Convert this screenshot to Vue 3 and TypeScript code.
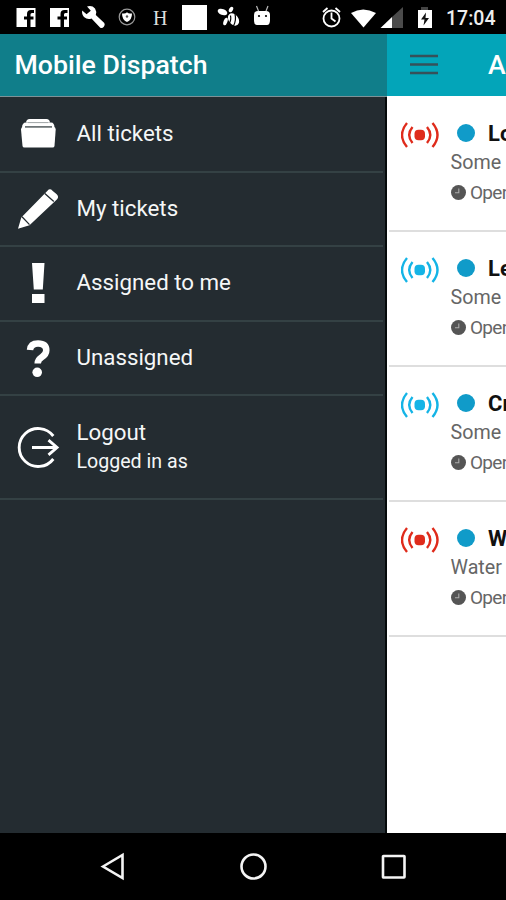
<script setup lang="ts">
interface MenuItem {
  icon: 'box' | 'pencil' | 'alert' | 'question' | 'logout'
  label: string
  detail?: string
}

interface Ticket {
  title: string
  summary: string
  urgent: boolean
}

const menu: MenuItem[] = [
  { icon: 'box', label: 'All tickets' },
  { icon: 'pencil', label: 'My tickets' },
  { icon: 'alert', label: 'Assigned to me' },
  { icon: 'question', label: 'Unassigned' },
  { icon: 'logout', label: 'Logout', detail: 'Logged in as' },
]

const tickets: Ticket[] = [
  { title: 'Lo', summary: 'Some', urgent: true },
  { title: 'Le', summary: 'Some', urgent: false },
  { title: 'Cr', summary: 'Some', urgent: false },
  { title: 'W', summary: 'Water', urgent: true },
]
</script>

<template>
  <div class="screen">
    <header class="status">
      <svg class="status-icons" viewBox="0 0 440 34" width="440" height="34">
        <g fill="#fff">
          <path d="M16.500 8h19v19h-5v-7.500h3v-3h-3v-2q0-1.500 1.500-1.500h2v-3h-3q-4 0-4 4v2.500h-3v3h3V27H16.500z" />
          <path d="M50 8h19v19h-5v-7.500h3v-3h-3v-2q0-1.500 1.500-1.500h2v-3h-3q-4 0-4 4v2.500h-3v3h3V27H50z" />
          <path d="M87 6.500q5-1.500 8 2 2 3 .8 6.500l8.500 8q1 1.800-.3 3.500-2 2.500-4 1l-8.500-9q-4 1.500-7.500-1.500-2.500-2.600-1.800-6.500l4.300 3.800 4.300-3.600z" />
          <path d="M122 13.500q4.500 0 5-1.500.5 1.500 5 1.500 0 6.500-5 8.500-5-2-5-8.500z" />
          <rect x="182" y="5" width="25" height="25" />
          <ellipse cx="233.500" cy="19.500" rx="4.800" ry="6.800" transform="rotate(-38 233.500 19.500)" />
          <ellipse cx="222.500" cy="12" rx="5" ry="3" transform="rotate(20 222.500 12)" />
          <ellipse cx="231" cy="9.500" rx="1.900" ry="3" transform="rotate(30 231 9.500)" />
          <ellipse cx="225.500" cy="21.500" rx="1.900" ry="4" transform="rotate(20 225.500 21.500)" />
          <path d="M254 15q0-4 4-4h8q4 0 4 4v5q0 5-3 5h-10q-3 0-3-5z" />
          <path d="M351 13q12-7 25 0L363.500 27.500z" />
          <path d="M380.500 28l11.500-11v11z" />
          <path d="M418 10h3V8h7v2h4v18h-14z" />
        </g>
        <path d="M392 17L403 7v21h-11z" fill="#4b4b4b" />
        <path d="M421 7h7v3h-7z" fill="#444" />
        <path d="M426 12.500l-5 7h3.500l-1 6 5.500-7.500h-3.500z" fill="#111" />
        <circle cx="127" cy="17" r="7.800" fill="none" stroke="#999" stroke-width="1.200" />
        <circle cx="127" cy="16.500" r="1.200" fill="#555" />
        <path d="M256.500 6l2 5M268 6l-2 5" stroke="#bbb" stroke-width="1.200" />
        <circle cx="259" cy="16" r="1.100" fill="#000" />
        <circle cx="266" cy="16" r="1.100" fill="#000" />
        <path d="M230.500 15.500q1 5-1.500 8M235 14q1.500 6-1.500 12" fill="none" stroke="#000" stroke-width="1.200" />
        <g fill="none" stroke="#fff" stroke-width="1.800">
          <circle cx="331.500" cy="18.500" r="8" />
          <path d="M331.500 12.500v6l4 3M323 12l4.500-4M340 12l-4.500-4" />
        </g>
      </svg>
      <span class="carrier">H</span>
      <span class="clock">17:04</span>
    </header>

    <div class="body">
      <aside class="drawer">
        <h1 class="drawer-title"><span>Mobile Dispatch</span></h1>
        <nav>
          <a v-for="item in menu" :key="item.label" class="item" :class="{ tall: item.detail }">
            <svg class="item-icon" viewBox="0 0 44 44" width="44" height="44" fill="#fff">
              <template v-if="item.icon === 'box'">
                <path d="M10 10.500q.4-3.500 3.500-3.500h17q3.100 0 3.500 3.500z" />
                <path d="M6 16q0-5.500 4-5.500h25q3.500 0 3.500 5.500z" />
                <path d="M5 17.500q0-2.500 2-2.500h31q1.700 0 1.700 2.500L38.500 34q-.2 1.500-2 1.500h-28q-1.800 0-2-1.500z" />
                <path d="M9 14.900h27" stroke="#535b5e" stroke-width="1.500" />
                <path d="M12 10.600h20" stroke="#a4a9ab" stroke-width="1" />
              </template>
              <template v-else-if="item.icon === 'pencil'">
                <path d="M2 41.700l3.300-11.200L31.500 3.700q2.400-2.700 5 0l4.200 3.600q2.500 2.500.4 4.900L13.500 38.200z" />
                <path d="M6 29.800l7.500 7.800M28.800 6.500l9 8" stroke="#242c31" stroke-width="1.300" />
              </template>
              <template v-else-if="item.icon === 'alert'">
                <path d="M16 2h12.500l-1.700 26.500h-9zM16 33h12.500v9H16z" />
              </template>
              <template v-else-if="item.icon === 'question'">
                <path d="M14 14q.7-6.500 8-6.500 8.300 0 8.300 6.800 0 4-4.300 6.700-4.300 2.600-4.300 6.500" fill="none" stroke="#fff" stroke-width="6.500" />
                <circle cx="21.200" cy="36.300" r="4.800" />
              </template>
              <g v-else fill="none" stroke="#fff" stroke-width="2.900">
                <path d="M37.300 11A19 19 0 1 0 37.300 34" />
                <path d="M16 22.500h25M32.500 15.200l8.500 7.300-8.500 7.300" />
              </g>
            </svg>
            <span class="item-text">
              <span class="label">{{ item.label }}</span>
              <span v-if="item.detail" class="detail">{{ item.detail }}</span>
            </span>
          </a>
        </nav>
      </aside>

      <main class="main">
        <div class="toolbar">
          <svg viewBox="0 0 28 22" width="28" height="22">
            <path d="M0 2h28M0 10.500h28M0 19h28" stroke="#36515a" stroke-width="2.400" />
          </svg>
          <span class="toolbar-title">A</span>
        </div>
        <section class="tickets">
          <article v-for="ticket in tickets" :key="ticket.title" class="ticket">
            <svg class="signal" :class="{ urgent: ticket.urgent }" viewBox="0 0 38 28" width="38" height="28">
              <rect x="13.500" y="8.700" width="10.500" height="10.500" rx="4" fill="currentColor" />
              <path
                d="M11.500 6q-6.600 8 0 16M26 6q6.600 8 0 16M6 2q-10 12 0 24M31.500 2q10 12 0 24"
                fill="none"
                stroke="currentColor"
                stroke-width="2.400"
              />
            </svg>
            <div class="info">
              <div class="title"><i class="dot"></i><b>{{ ticket.title }}</b></div>
              <div class="summary">{{ ticket.summary }}</div>
              <div class="state">
                <svg viewBox="0 0 15 15" width="15" height="15">
                  <circle cx="7.500" cy="7.500" r="7.500" fill="#555" />
                  <path d="M7.800 3.500v4.300H4" fill="none" stroke="#aaa" stroke-width="1.100" />
                </svg>
                <span>Open</span>
              </div>
            </div>
          </article>
        </section>
      </main>
    </div>

    <footer class="navbar">
      <svg viewBox="0 0 30 30" width="30" height="30"><path d="M5 14.500L24.500 3v23z" /></svg>
      <svg viewBox="0 0 30 30" width="30" height="30"><circle cx="14.500" cy="14.500" r="12" /></svg>
      <svg viewBox="0 0 30 30" width="30" height="30"><rect x="4" y="4" width="21.500" height="21.500" rx=".5" /></svg>
    </footer>
  </div>
</template>

<style>
body {
  margin: 0;
  background: #000;
}
</style>

<style scoped>
.screen {
  display: flex;
  flex-direction: column;
  width: 506px;
  height: 900px;
  overflow: hidden;
  background: #000;
  font-family: Roboto, 'Liberation Sans', sans-serif;
  white-space: nowrap;
}

.status {
  position: relative;
  flex: none;
  display: flex;
  height: 34px;
  color: #fff;
}

.status-icons {
  flex: none;
}

.carrier {
  position: absolute;
  left: 153px;
  top: 5px;
  font: 20px/26px 'Liberation Serif', serif;
  color: #ddd;
}

.clock {
  margin-left: 6px;
  font-size: 19.5px;
  font-weight: 500;
  line-height: 37px;
  color: #eee;
}

.body {
  flex: none;
  display: flex;
  height: 799px;
}

.drawer {
  box-sizing: border-box;
  flex: none;
  width: 387px;
  border-right: 2px solid #050a0b;
  background: #242c31;
  color: #f5f7f7;
}

.drawer-title {
  box-sizing: border-box;
  height: 63px;
  width: 387px;
  margin: 0 0 1px;
  padding-left: 14.5px;
  border-bottom: 1px solid #7e9297;
  background: #107e8a;
  color: #fff;
  font-size: 26.700px;
  font-weight: 500;
  line-height: 62px;
}

.item {
  box-sizing: border-box;
  display: flex;
  align-items: center;
  height: 74.5px;
  margin-right: 2px;
  padding-left: 16px;
  border-bottom: 2px solid #344144;
}

.item.tall {
  height: 104px;
}

.item-icon {
  flex: none;
}

.item-text {
  display: flex;
  flex-direction: column;
  margin-left: 16.5px;
}

.label {
  padding-bottom: 2px;
  font-size: 22.300px;
  line-height: 28px;
}

.detail {
  font-size: 19.600px;
  line-height: 28px;
}

.main {
  flex: none;
  width: 119px;
  overflow: hidden;
  background: #fff;
}

.toolbar {
  display: flex;
  align-items: center;
  height: 62px;
  padding-left: 23px;
  background: #03a5b9;
}

.toolbar-title {
  margin-left: 50px;
  color: #fff;
  font-size: 26.700px;
  font-weight: 500;
}

.tickets {
  padding: 1px 0 0 2px;
}

.ticket {
  box-sizing: border-box;
  display: flex;
  height: 135px;
  padding: 24px 0 0 12px;
  border-bottom: 2px solid #dedede;
}

.signal {
  flex: none;
  color: #14b4e6;
}

.signal.urgent {
  color: #df2b1b;
}

.info {
  margin-left: 11.5px;
}

.title {
  display: flex;
  align-items: center;
  height: 26px;
  margin: -1px 0 0 6.5px;
  color: #111;
  font-size: 22px;
}

.title b {
  font-weight: 700;
  margin-left: 13px;
}

.dot {
  width: 18px;
  height: 18px;
  border-radius: 50%;
  background: #109bc9;
}

.summary {
  color: #666;
  font-size: 19.700px;
  line-height: 34px;
}

.state {
  display: flex;
  align-items: center;
  gap: 4.5px;
  height: 25px;
  color: #666;
  font-size: 19px;
  letter-spacing: -0.7px;
}

.navbar {
  flex: none;
  display: flex;
  justify-content: center;
  gap: 110.5px;
  height: 67px;
  padding: 19px 0 0 1px;
  box-sizing: border-box;
}

.navbar svg {
  flex: none;
  fill: none;
  stroke: #f4f4f4;
  stroke-width: 2.600;
}
</style>
